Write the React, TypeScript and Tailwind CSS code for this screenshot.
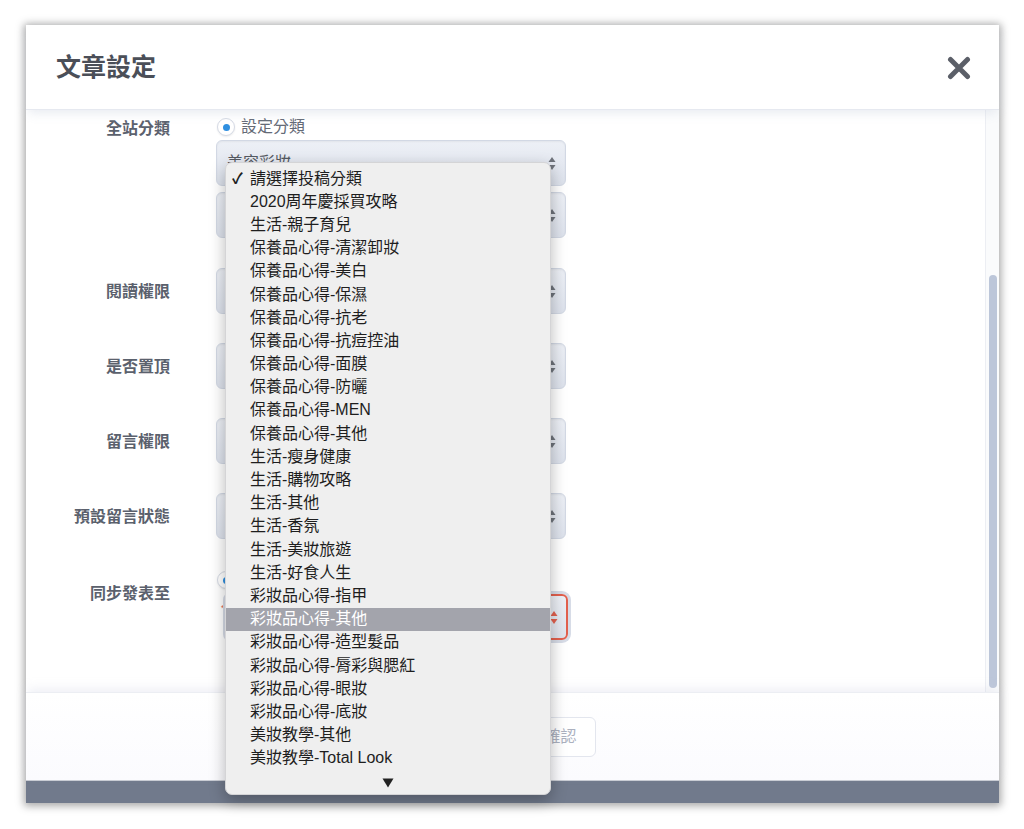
import React from 'react';

const FONT = '"Liberation Sans", "Noto Sans CJK TC", "DejaVu Sans", sans-serif';

const options = [
  '請選擇投稿分類',
  '2020周年慶採買攻略',
  '生活-親子育兒',
  '保養品心得-清潔卸妝',
  '保養品心得-美白',
  '保養品心得-保濕',
  '保養品心得-抗老',
  '保養品心得-抗痘控油',
  '保養品心得-面膜',
  '保養品心得-防曬',
  '保養品心得-MEN',
  '保養品心得-其他',
  '生活-瘦身健康',
  '生活-購物攻略',
  '生活-其他',
  '生活-香氛',
  '生活-美妝旅遊',
  '生活-好食人生',
  '彩妝品心得-指甲',
  '彩妝品心得-其他',
  '彩妝品心得-造型髮品',
  '彩妝品心得-脣彩與腮紅',
  '彩妝品心得-眼妝',
  '彩妝品心得-底妝',
  '美妝教學-其他',
  '美妝教學-Total Look',
];

function Arrows({ red = false }: { red?: boolean }) {
  const c = red ? '#e2604e' : '#6f737b';
  return (
    <svg width="8" height="15" viewBox="0 0 8 15">
      <polygon points="4,1 7.5,6 0.5,6" fill={c} />
      <polygon points="0.5,9 7.5,9 4,14" fill={c} />
    </svg>
  );
}

function SelectBox({ text, red = false }: { text?: string; red?: boolean }) {
  return (
    <div
      className={
        red
          ? 'h-[46px] flex items-center justify-between pl-[10px] pr-[8px] rounded-[6px] border-2 border-[#e2604e] bg-gradient-to-b from-[#edf0f6] to-[#dfe3ec] ring-[3px] ring-[#d7dce7]'
          : 'h-[46px] flex items-center justify-between pl-[10px] pr-[9px] rounded-[6px] border border-[#d2d8e4] bg-gradient-to-b from-[#edf0f6] to-[#dde2ec] shadow-[inset_0_1px_2px_rgba(0,0,0,0.05)]'
      }
    >
      <span className="text-[16px] text-[#555a63]">{text}</span>
      <Arrows red={red} />
    </div>
  );
}

function Radio({ label }: { label?: string }) {
  return (
    <div className="h-[20px] flex items-center gap-[6px] pl-[1px]">
      <span className="w-[18px] h-[18px] rounded-full border border-[#d5dae5] bg-white flex items-center justify-center shadow-[0_1px_2px_rgba(0,0,0,0.08)]">
        <span className="w-[7px] h-[7px] rounded-full bg-[#2f8fe0]" />
      </span>
      {label && <span className="text-[16px] text-[#646a76]">{label}</span>}
    </div>
  );
}

function Row({ label, children, top = 'mt-[29px]' }: { label: string; children: React.ReactNode; top?: string }) {
  return (
    <div className={`flex items-center ${top}`}>
      <div className="w-[144px] pt-[2px] text-right text-[16px] font-semibold text-[#5b616d]">{label}</div>
      <div className="ml-[46px] w-[350px]">{children}</div>
    </div>
  );
}

function Dropdown() {
  return (
    <div className="absolute left-[199px] top-[137px] w-[326px] h-[633px] rounded-[7px] bg-[#efefef] border border-[#d4d4d6] shadow-[0_6px_16px_rgba(0,0,0,0.28)] pt-[4px] text-[16px] text-[#1e1e1e] z-20">
      {options.map((o, i) => {
        const hi = i === 19;
        return (
          <div
            key={o}
            className={`h-[23.2px] flex items-center pl-[6px] ${hi ? 'bg-[#a3a4ac] text-white' : ''}`}
          >
            <span className="w-[18px] text-[15px] font-bold leading-none">{i === 0 ? '✓' : ''}</span>
            <span className="leading-none">{o}</span>
          </div>
        );
      })}
      <div className="h-[26px] flex items-center justify-center">
        <svg width="12" height="10" viewBox="0 0 12 10">
          <polygon points="0.5,0.5 11.5,0.5 6,9.5" fill="#222" />
        </svg>
      </div>
    </div>
  );
}

export default function App() {
  return (
    <div className="w-[1024px] h-[829px] bg-white overflow-hidden pt-[25px] pl-[26px]" style={{ fontFamily: FONT }}>
      <div className="relative w-[973px] flex flex-col shadow-[0_1px_8px_2px_rgba(0,0,0,0.35)]">
        {/* header */}
        <div className="relative z-10 h-[85px] bg-white flex items-center justify-between pl-[30px] pr-[28px] pt-[2px] border-b border-[#e6e9f0] shadow-[0_5px_10px_-2px_rgba(205,210,225,0.45)]">
          <h1 className="text-[25px] font-bold text-[#4b4f58]">文章設定</h1>
          <svg width="24" height="24" viewBox="0 0 24 24">
            <path d="M3.5 3.5 L20.5 20.5 M20.5 3.5 L3.5 20.5" stroke="#5b5f68" strokeWidth="5" strokeLinecap="round" />
          </svg>
        </div>

        {/* body */}
        <div className="h-[582px] bg-white flex">
          <div className="flex-1 pt-[7px]">
            <div className="flex items-start">
              <div className="w-[144px] pt-[2px] text-right text-[16px] leading-[20px] font-semibold text-[#5b616d]">全站分類</div>
              <div className="ml-[46px] w-[350px]">
                <Radio label="設定分類" />
                <div className="mt-[3px]">
                  <SelectBox text="美容彩妝" />
                </div>
                <div className="mt-[6px]">
                  <SelectBox />
                </div>
              </div>
            </div>
            <Row label="閱讀權限" top="mt-[30px]">
              <SelectBox />
            </Row>
            <Row label="是否置頂">
              <SelectBox />
            </Row>
            <Row label="留言權限">
              <SelectBox />
            </Row>
            <Row label="預設留言狀態">
              <SelectBox />
            </Row>
            <div className="flex items-start mt-[31px]">
              <div className="w-[144px] pt-[14px] text-right text-[16px] leading-[20px] font-semibold text-[#5b616d]">同步發表至</div>
              <div className="ml-[46px] w-[352px]">
                <Radio />
                <div className="mt-[4px] flex items-start">
                  <span className="w-[10px] pt-[10px] text-[9px] leading-none text-[#e2604e] pl-[5px]">*</span>
                  <div className="flex-1">
                    <SelectBox red />
                  </div>
                </div>
              </div>
            </div>
          </div>
          {/* scrollbar */}
          <div className="w-[14px] border-l border-[#eceef3] bg-[#fafbfc]">
            <div className="ml-[3px] mt-[165px] w-[8px] h-[413px] rounded-full bg-[#bcc6d9]" />
          </div>
        </div>

        {/* footer */}
        <div className="relative z-10 h-[88px] bg-gradient-to-b from-white to-[#fbfbfe] border-t border-[#eceef3] shadow-[0_-5px_10px_-2px_rgba(205,210,225,0.35)] flex items-center justify-center gap-[26px]">
          <button className="w-[70px] h-[40px] rounded-[6px] border border-[#e3e6ee] text-[16px] text-[#acb1bf] bg-white">取消</button>
          <button className="w-[70px] h-[40px] rounded-[6px] border border-[#e3e6ee] text-[16px] text-[#acb1bf] bg-white">確認</button>
        </div>

        {/* backdrop strip */}
        <div className="h-[23px] bg-[#717a8c] border-t border-[#c9ccd4]" />

        <Dropdown />
      </div>
    </div>
  );
}
